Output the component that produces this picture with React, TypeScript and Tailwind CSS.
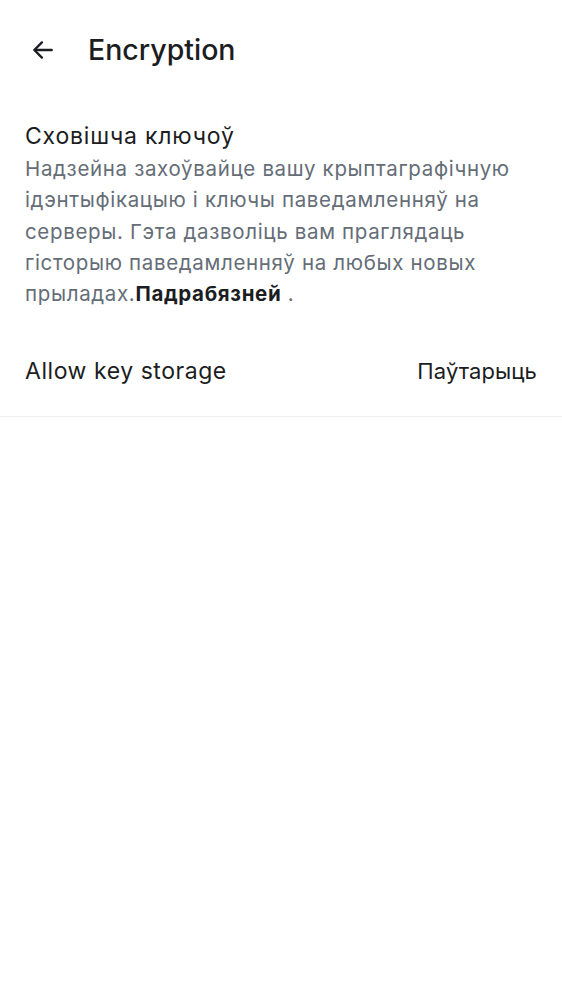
import React from "react";

export default function App() {
  return (
    <div className="w-[562px] h-[1000px] bg-white font-['Inter',sans-serif]">
      <div className="flex items-center h-[100px] pl-[30px]">
        <svg width="26" height="26" viewBox="0 0 24 24" fill="none" stroke="#1b1d22" strokeWidth="2.2" strokeLinecap="round" strokeLinejoin="round">
          <path d="M20 12H4.5" />
          <path d="M11 5l-7 7 7 7" />
        </svg>
        <div className="ml-[32px] text-[28.5px] font-medium text-[#1b1d22]">Encryption</div>
      </div>
      <div className="px-[25px] pt-[20px]">
        <div className="text-[23px] leading-[32px] tracking-[0.8px] text-[#1b1d22]">Сховішча ключоў</div>
        <div className="text-[20.5px] leading-[31.25px] tracking-[0.66px] text-[#656d77] pt-[1px]">
          Надзейна захоўвайце вашу крыптаграфічную ідэнтыфікацыю і ключы паведамленняў на серверы. Гэта дазволіць вам праглядаць гісторыю паведамленняў на любых новых прыладах.<span className="font-bold text-[#1b1d22]">Падрабязней</span> .
        </div>
      </div>
      <div className="flex items-center justify-between px-[25px] pt-[46px] pb-[29px] leading-[32px] border-b border-[#eef0f2]">
        <div className="text-[23px] tracking-[0.55px] text-[#1b1d22]">Allow key storage</div>
        <div className="text-[22px] tracking-[0.1px] text-[#1b1d22]">Паўтарыць</div>
      </div>
    </div>
  );
}
